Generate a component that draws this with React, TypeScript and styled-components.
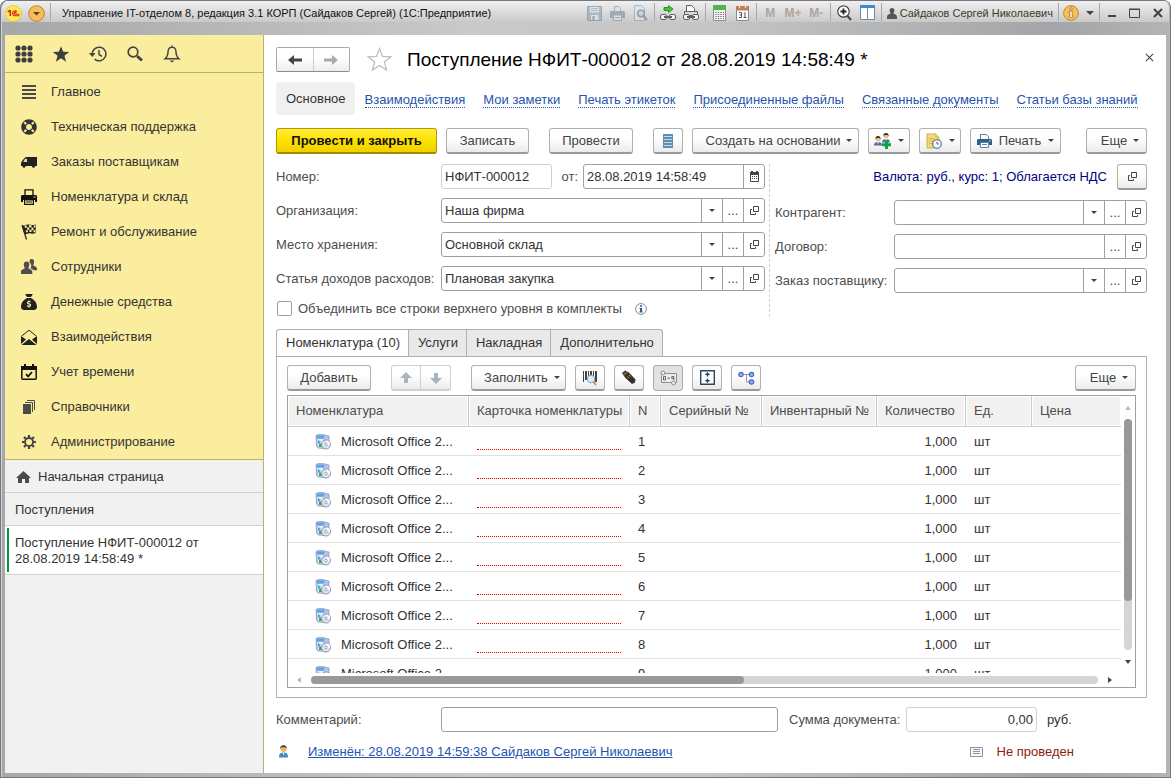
import React, { useState } from "react";
import styled, { createGlobalStyle, css } from "styled-components";
import { FaLifeRing } from "react-icons/fa";
import { FaSackDollar } from "react-icons/fa6";

const Global = createGlobalStyle`
  *, *::before, *::after { box-sizing: border-box; }
  body { margin: 0; font-family: "Liberation Sans", Arial, sans-serif; font-size: 13px; line-height: 16px; color: #333; }
  button, input { font: inherit; color: inherit; }
  button { cursor: pointer; }
  svg { display: block; flex: none; }
`;

/* ---------- window ---------- */

const Window = styled.div`
  height: 100vh;
  min-height: 640px;
  min-width: 1000px;
  display: flex;
  flex-direction: column;
  padding: 0 5px 5px;
  border-radius: 8px 8px 0 0;
  background: linear-gradient(90deg, #a6a7aa 0, #c9c9c9 40%, #c6c6c6 60%, #a4a5a8 90%, #b4b4b6 100%);
  box-shadow: inset 1px 1px 0 #77777a, inset -1px -1px 0 #77777a, inset 2px 2px 0 #d4d4d6;
`;

const TitleBar = styled.header`
  height: 35px;
  flex: none;
  display: flex;
  align-items: flex-start;
  padding-top: 2px;
  margin: 0 -3px;
  color: #111;
  background: linear-gradient(#77777a 0 1px, #f0f0f0 1px, #c9c9ca 22px, transparent 22px);
  border-radius: 8px 8px 0 0;
`;

const TitleText = styled.h1`
  flex: 1;
  min-width: 0;
  margin: 0;
  padding-left: 9px;
  font-size: 11px;
  font-weight: 400;
  line-height: 22px;
  white-space: nowrap;
  overflow: hidden;
`;

const TitleButton = styled.button<{ $w?: number; $dim?: boolean }>`
  width: ${(p) => p.$w ?? 23}px;
  height: 22px;
  flex: none;
  display: flex;
  align-items: center;
  justify-content: center;
  padding: 0;
  border: 0;
  background: none;
  font-size: 12px;
  font-weight: 700;
  color: #b0a39c;
  opacity: ${(p) => (p.$dim ? 0.6 : 1)};
`;

const TitleSep = styled.i<{ $gap?: number }>`
  width: 1px;
  height: 18px;
  flex: none;
  margin: 1px ${(p) => p.$gap ?? 2}px 0;
  background: #a9a9ab;
`;

const UserName = styled.button`
  display: flex;
  align-items: center;
  gap: 3px;
  height: 22px;
  padding: 0 3px;
  border: 0;
  background: none;
  font-size: 11px;
  white-space: nowrap;
  color: #3f3a2a;
`;

const Body = styled.div`
  flex: 1;
  min-height: 0;
  display: flex;
  background: #fff;
`;

/* ---------- sidebar ---------- */

const Sidebar = styled.aside`
  width: 259px;
  flex: none;
  background: #f1f1f1;
  border-right: 1px solid #bdb06c;
`;

const Sections = styled.nav`
  background: #fbed9e;
  border-bottom: 1px solid #bdb06c;
`;

const QuickBar = styled.div`
  height: 38px;
  display: flex;
  border-bottom: 1px solid #bdb06c;
  margin-bottom: 1px;
`;

const QuickButton = styled.button`
  width: 37px;
  padding: 0;
  display: flex;
  align-items: center;
  justify-content: center;
  border: 0;
  background: none;
  color: #444;
`;

const SectionLink = styled.a`
  height: 35px;
  display: flex;
  align-items: center;
  gap: 14px;
  padding-left: 16px;
  color: #333;
  text-decoration: none;
`;

const OpenTab = styled.a<{ $active?: boolean }>`
  display: flex;
  align-items: center;
  gap: 6px;
  padding: 9px 40px 7px 10px;
  border-bottom: 1px solid #d2d2d2;
  color: #333;
  text-decoration: none;
  ${(p) =>
    p.$active &&
    css`
      background: linear-gradient(#009646, #009646) 2px center / 2px calc(100% - 4px) no-repeat, #fff;
    `}
`;

/* ---------- document ---------- */

const Main = styled.main`
  flex: 1;
  min-width: 0;
  display: flex;
  flex-direction: column;
  padding: 0 19px 7px 12px;
`;

const Heading = styled.div`
  height: 47px;
  flex: none;
  display: flex;
  align-items: center;
  padding-top: 2px;
`;

const HistoryNav = styled.div`
  display: flex;
  height: 25px;
  width: 74px;
  margin-right: 17px;
  border: 1px solid #aaa;
  border-bottom-color: #8c8c8c;
  border-radius: 2px;
  background: linear-gradient(#fff 40%, #ededed);
`;

const HistoryButton = styled.button`
  flex: 1;
  display: flex;
  align-items: center;
  justify-content: center;
  padding: 0;
  border: 0;
  background: none;
  & + & {
    border-left: 1px solid #ccc;
  }
`;

const PlainButton = styled.button`
  display: flex;
  padding: 0;
  border: 0;
  background: none;
`;

const CloseForm = styled(PlainButton)`
  margin: -5px -7px 0 0;
`;

const DocTitle = styled.h2`
  flex: 1;
  margin: 0 0 0 15px;
  font-size: 19px;
  line-height: 24px;
  font-weight: 400;
  color: #000;
`;

const DocNav = styled.nav`
  display: flex;
  align-items: center;
  gap: 18px;
  height: 33px;
  flex: none;
  margin-bottom: 13px;
  white-space: nowrap;
`;

const DocNavCurrent = styled.span`
  padding: 1px 9px 0 10px;
  margin-right: -8px;
  line-height: 32px;
  border-radius: 4px;
  background: #f0f0f0;
`;

const DocNavLink = styled.a`
  margin-top: 3px;
  line-height: 14px;
  color: #2554ae;
  text-decoration: none;
  border-bottom: 1px dotted #2554ae;
`;

const Commands = styled.div`
  display: flex;
  gap: 9px;
  flex: none;
`;

const Button = styled.button<{ $w?: number; $primary?: boolean; $pressed?: boolean; $gapBefore?: boolean; $end?: boolean; $menu?: boolean }>`
  width: ${(p) => p.$w ?? 30}px;
  height: 26px;
  flex: none;
  display: flex;
  align-items: center;
  justify-content: center;
  gap: ${(p) => (p.$menu ? 6 : 7)}px;
  padding: 0 0 0 ${(p) => (p.$menu ? 7 : 0)}px;
  white-space: nowrap;
  color: #444;
  border: 1px solid #b0b0b0;
  border-bottom: 2px solid #9a9a9a;
  border-radius: 3px;
  background: linear-gradient(#fff 40%, #ebebeb);
  ${(p) =>
    p.$primary &&
    css`
      font-weight: 700;
      color: #111;
      border-color: #b09a00;
      border-bottom-color: #a08c00;
      background: linear-gradient(#ffec3c, #ffe100 50%, #f0cf00);
    `}
  ${(p) =>
    p.$pressed &&
    css`
      border: 1px solid #aaa;
      background: #e2e2e2;
    `}
  ${(p) => p.$gapBefore && "margin-left: 11px;"}
  ${(p) => p.$end && "margin-left: auto;"}
`;

const MoveGroup = styled.div`
  display: flex;
  margin-left: 11px;
  button:first-child { border-radius: 3px 0 0 3px; border-color: #d0d0d0; }
  button:last-child { border-radius: 0 3px 3px 0; border-color: #d0d0d0; border-left: 0; }
`;

const Form = styled.div`
  display: grid;
  grid-template-columns: minmax(0, 489fr) minmax(0, 372fr);
  gap: 10px;
  flex: none;
  margin-top: 10px;
`;

const FormColumn = styled.div<{ $right?: boolean }>`
  display: flex;
  flex-direction: column;
  gap: 9px;
  ${(p) =>
    p.$right &&
    css`
      margin-left: -6px;
      padding-left: 5px;
      border-left: 1px dashed #d0d0d0;
    `}
`;

const FieldRow = styled.div<{ $label: number }>`
  display: grid;
  grid-template-columns: ${(p) => p.$label}px minmax(0, 1fr);
  align-items: center;
  white-space: nowrap;
  color: #4d4d4d;
`;

const Combo = styled.div<{ $muted?: boolean; $w?: number }>`
  display: flex;
  height: 25px;
  ${(p) => (p.$w ? `width: ${p.$w}px; flex: none;` : "flex: 1;")}
  border: 1px solid ${(p) => (p.$muted ? "#d0d0d0" : "#a0a0a0")};
  border-radius: 3px;
  background: #fff;
  overflow: hidden;
`;

const TextInput = styled.input<{ $num?: boolean }>`
  flex: 1;
  min-width: 0;
  padding: 0 3px;
  border: 0;
  outline: 0;
  background: none;
  color: #333;
  text-align: ${(p) => (p.$num ? "right" : "left")};
`;

const ComboButton = styled.button`
  width: 21px;
  flex: none;
  display: flex;
  align-items: center;
  justify-content: center;
  padding: 0;
  border: 0;
  border-left: 1px solid #a0a0a0;
  background: none;
  color: #444;
`;

const NumberLine = styled.div`
  display: flex;
  align-items: center;
  justify-content: space-between;
`;

const DateGroup = styled.div`
  display: flex;
  align-items: center;
  gap: 5px;
`;

const CurrencyLine = styled.div`
  display: flex;
  align-items: center;
  justify-content: flex-end;
  gap: 10px;
  margin-bottom: 1px;
  color: #00007d;
  white-space: nowrap;
`;

const CheckLine = styled.div`
  display: flex;
  align-items: center;
  gap: 6px;
  height: 17px;
  padding-left: 1px;
  color: #4d4d4d;
`;

const CheckBox = styled.input`
  appearance: none;
  width: 15px;
  height: 15px;
  margin: 0;
  border: 1px solid #a0a0a0;
  border-radius: 2px;
  background: #fff;
`;

const CheckLabel = styled.label`
  margin-right: 7px;
`;

/* ---------- tabs and table ---------- */

const Tabs = styled.div`
  display: flex;
  flex: none;
  height: 28px;
  margin: 12px 0 -1px;
`;

const Tab = styled.button<{ $active: boolean }>`
  padding: 0 8px 0 9px;
  border: 1px solid #b0b0b0;
  border-left-width: 0;
  background: #e9e9e9;
  color: #333;
  &:first-child { border-left-width: 1px; border-radius: 3px 0 0 0; }
  &:last-child { border-radius: 0 3px 0 0; }
  ${(p) => p.$active && "background: #fff; border-bottom-color: #fff;"}
`;

const Panel = styled.section`
  flex: 1;
  min-height: 0;
  display: flex;
  flex-direction: column;
  gap: 4px;
  padding: 8px 10px 9px;
  border: 1px solid #b0b0b0;
`;

const Grid = styled.div`
  flex: 1;
  min-height: 0;
  display: grid;
  grid-template: minmax(0, 1fr) 14px / minmax(0, 1fr) 14px;
  border: 1px solid #a0a0a0;
`;

const TableClip = styled.div`
  overflow: hidden;
`;

const Table = styled.table`
  width: 100%;
  table-layout: fixed;
  border-collapse: separate;
  border-spacing: 0;
  color: #333;
`;

const Th = styled.th<{ $w?: number }>`
  ${(p) => (p.$w ? `width: ${p.$w}px;` : "")}
  height: 31px;
  padding: 0 4px 0 8px;
  text-align: left;
  font-weight: 400;
  white-space: nowrap;
  color: #4d4d4d;
  background: #f1f1f1;
  border-bottom: 1px solid #cbcbcb;
  border-right: 1px solid #cbcbcb;
  box-shadow: inset 0 0 0 1px #fff;
  &:last-child { border-right: 0; }
`;

const Td = styled.td<{ $num?: boolean }>`
  height: 29px;
  padding: 1px 9px 0 8px;
  border-bottom: 1px solid #e2e2e2;
  text-align: ${(p) => (p.$num ? "right" : "left")};
  white-space: nowrap;
`;

const ItemCell = styled.div`
  display: flex;
  align-items: center;
  gap: 10px;
  padding-left: 19px;
`;

const RequiredMark = styled.div`
  height: 16px;
  border-bottom: 1px dotted #e00000;
`;

const VScroll = styled.div`
  display: flex;
  flex-direction: column;
  align-items: center;
  justify-content: space-between;
  padding: 8px 0 7px;
`;

const HScroll = styled.div`
  display: flex;
  align-items: center;
  justify-content: space-between;
  padding: 0 7px;
`;

const Track = styled.div<{ $vertical?: boolean }>`
  flex: 1;
  border-radius: 4px;
  background: #d5d5d5;
  display: flex;
  ${(p) => (p.$vertical ? "width: 8px; margin: 7px 0 8px; flex-direction: column;" : "height: 8px; margin: 0 8px;")}
`;

const Thumb = styled.div<{ $share: number }>`
  flex: 0 0 ${(p) => p.$share}%;
  border-radius: 4px;
  background: #999;
`;

/* ---------- footer ---------- */

const Totals = styled.div`
  display: grid;
  grid-template-columns: 165px minmax(0, 1fr) 128px 131px 110px;
  align-items: center;
  flex: none;
  margin-top: 9px;
  white-space: nowrap;
  color: #4d4d4d;
`;

const SumLabel = styled.label`
  padding-left: 11px;
`;

const Currency = styled.span`
  padding-left: 10px;
  color: #333;
`;

const Status = styled.div`
  display: flex;
  align-items: center;
  flex: none;
  height: 29px;
  margin-top: 5px;
`;

const ChangedLink = styled.a`
  margin-left: 17px;
  color: #2554ae;
  text-decoration: underline;
`;

const NotPosted = styled.span`
  display: flex;
  align-items: center;
  gap: 14px;
  margin-left: auto;
  margin-right: 73px;
  color: #8c1a11;
`;

/* ---------- icons ---------- */

const Arrow = ({ size = 6, color = "#444" }: { size?: number; color?: string }) => (
  <svg width={size} height={size / 2} viewBox="0 0 6 3"><path d="M0 0h6L3 3z" fill={color} /></svg>
);

const Tri = ({ dir, color }: { dir: "up" | "down" | "left" | "right"; color: string }) => {
  const d = { up: "M4 2l3 4H1z", down: "M1 2h6L4 6z", left: "M6 1v6L2 4z", right: "M2 1v6l4-3z" }[dir];
  return <svg width="8" height="8" viewBox="0 0 8 8"><path d={d} fill={color} /></svg>;
};

const OpenIcon = () => (
  <svg width="11" height="11" viewBox="0 0 11 11" fill="none" stroke="#444">
    <path d="M4.500 1.500h5v5h-5zM3 4.500H1.500v5h5V8" />
  </svg>
);

const CalendarIcon = () => (
  <svg width="11" height="11" viewBox="0 0 11 11">
    <path d="M1 1h1V0h2v1h3V0h2v1h1v3H1z" fill="#444" />
    <path d="M1.500 4v6.500h8V4" fill="none" stroke="#444" />
    <path d="M3 5h1v1H3zM5 5h1v1H5zM7 5h1v1H7zM3 7h1v1H3zM5 7h1v1H5zM7 7h1v1H7z" fill="#444" />
  </svg>
);

const BackArrow = ({ flip, color }: { flip?: boolean; color: string }) => (
  <svg width="14" height="12" viewBox="0 0 14 12">
    <path d="M0 6l6-5v3.600h8v2.800H6V11z" fill={color} transform={flip ? "matrix(-1 0 0 1 14 0)" : undefined} />
  </svg>
);

const MoveArrow = ({ down }: { down?: boolean }) => (
  <svg width="12" height="12" viewBox="0 0 12 12">
    <path d="M6 0l6 6H8v5H4V6H0z" fill="#a9b4bc" transform={down ? "matrix(1 0 0 -1 0 12)" : undefined} />
  </svg>
);

const Star = ({ size, outline }: { size: number; outline?: boolean }) => (
  <svg width={size} height={size} viewBox="0 0 24 24">
    <path
      d="M12 1.500l2.900 7.600 8 .3-6.300 5 2.200 7.800-6.800-4.500-6.800 4.500 2.200-7.800-6.300-5 8-.3z"
      fill={outline ? "#fff" : "#3f3f3f"} stroke={outline ? "#b9bec4" : "none"} strokeWidth="1.200"
    />
  </svg>
);

const GridDots = () => (
  <svg width="18" height="18" viewBox="0 0 18 18" fill="#3f3f3f">
    {[3, 9, 15].map((y) => [3, 9, 15].map((x) => <circle key={`${x}${y}`} cx={x} cy={y} r="2.600" />))}
  </svg>
);

const HistoryIcon = () => (
  <svg width="18" height="18" viewBox="0 0 18 18" fill="none" stroke="#444" strokeWidth="1.500">
    <path d="M3.300 9.500a6.800 6.800 0 1 1 2.300 4.600M10 5v4.500l3 1.800" />
    <path d="M0 8h6.500l-3.200 4z" fill="#444" stroke="none" />
  </svg>
);

const SearchIcon = () => (
  <svg width="18" height="18" viewBox="0 0 18 18" fill="none" stroke="#444">
    <circle cx="7" cy="7" r="4.800" strokeWidth="1.700" />
    <path d="M11 11l5 4.500" strokeWidth="3" />
  </svg>
);

const BellIcon = () => (
  <svg width="18" height="18" viewBox="0 0 18 18" fill="none" stroke="#444" strokeWidth="1.400">
    <path d="M9 2.200c-3 0-4 2.300-4 5 0 3.500-1.200 5-3 6.600h14c-1.800-1.600-3-3.100-3-6.600 0-2.700-1-5-4-5zM9 .5v2" />
    <path d="M6.500 15.500h5L9 17.500z" fill="#444" stroke="none" />
  </svg>
);

const LinesIcon = () => (
  <svg width="16" height="16" viewBox="0 0 16 16" fill="#4a4a4a">
    <path d="M1 1h14v2H1zM1 5h14v2H1zM1 9h14v2H1zM1 13h14v2H1z" />
  </svg>
);

const VanIcon = () => (
  <svg width="16" height="16" viewBox="0 0 16 16">
    <path d="M5 3h11v9H0V9l1-2 2.500-3z" fill="#222" />
    <path d="M4 4.800h2V8H2.300z" fill="#e9dc94" />
    <circle cx="3" cy="12" r="1.700" fill="#222" /><circle cx="12.500" cy="12" r="1.700" fill="#222" />
  </svg>
);

const PrinterIcon = () => (
  <svg width="16" height="16" viewBox="0 0 16 16">
    <path d="M4 6V.8h8V6" fill="none" stroke="#111" strokeWidth="1.300" />
    <path d="M1 6h14l1 1v6h-2v-2H2v2H0V7z" fill="#111" />
    <path d="M3.600 11h8.800v4.300H3.600z" fill="#fbed9e" stroke="#111" strokeWidth="1.200" />
    <path d="M5 13h6" stroke="#111" /><path d="M12.500 8h2" stroke="#fbed9e" />
  </svg>
);

const FlagIcon = () => (
  <svg width="16" height="16" viewBox="0 0 16 16">
    <path d="M1 1l4.500 14.500" stroke="#222" strokeWidth="1.200" />
    <path d="M1 1.500C4 2 5 0 8 .5s4 1 7-.3L14.500 9c-2.500 1.300-4 .3-6 .2s-3 1.300-5 1z" fill="#222" />
    <path d="M3.500 1.800l2-.6.5 2.200-2 .6zM8 .9l2.500.4v2.200L8 3.200zM6 3.500l2-.3.400 2.500-2 .3zM10.500 3.500l2 .2-.1 2.500-2-.3zM4.600 6.600l1.900-.6.4 2-1.900.6zM8.500 5.700l2 .3v2l-2-.1zM12.900 1.400l1.600-.4v2.400l-1.700.2zM12.500 6.200l1.700-.3-.1 2.100-1.700.4z" fill="#fbed9e" />
  </svg>
);

const PeopleIcon = () => (
  <svg width="16" height="16" viewBox="0 0 16 16" fill="#4f4f4f">
    <path d="M10.500 0c2 0 2.800 1.500 2.600 3.300-.1 1.400-.7 2.200-.9 3 1.300.9 3.800 1.400 3.800 3.400v1.600h-3.500c-.6-.9-2-1.400-3-1.800.8-1.200 1.500-4.500-.9-6.100C8.500 1.600 8.700 0 10.500 0z" />
    <path d="M5.500 2.500c2.200 0 3 1.600 2.800 3.500-.1 1.400-.8 2.400-1 3.200 1.500 1 4 1.400 4 3.600V15H0v-2.200c0-2.200 2.500-2.600 3.800-3.600-.3-.8-.9-1.800-1-3.200-.2-1.900.6-3.500 2.700-3.500z" />
  </svg>
);

const MailIcon = () => (
  <svg width="16" height="16" viewBox="0 0 16 16">
    <path d="M.7 7L8 1.200 15.300 7" fill="none" stroke="#222" />
    <path d="M0 7l5 3.500L0 15zM16 7l-5 3.500 5 4.500z" fill="#222" />
    <path d="M8 10l7.500 6H.5z" fill="#222" />
  </svg>
);

const TimeIcon = () => (
  <svg width="16" height="16" viewBox="0 0 16 16">
    <rect x=".8" y="2.800" width="14.400" height="12.400" rx="1" fill="none" stroke="#111" strokeWidth="1.500" />
    <path d="M0 2h3V0h2v2h6V0h2v2h3v4H0z" fill="#111" />
    <path d="M5 10.200l2.200 2.200L11 8" fill="none" stroke="#111" strokeWidth="1.700" />
  </svg>
);

const BooksIcon = () => (
  <svg width="16" height="16" viewBox="0 0 16 16">
    <path d="M2 5h8v10H2z" fill="#4a4a4a" />
    <path d="M4 3.500h7.500V13M6 1.500h7.500V11" fill="none" stroke="#4a4a4a" />
  </svg>
);

const GearIcon = () => (
  <svg width="16" height="16" viewBox="0 0 16 16" fill="none" stroke="#444">
    <circle cx="8" cy="8" r="4" strokeWidth="1.800" />
    <g strokeWidth="2.200">
      <path d="M8 1v2.500M8 12.500V15M1 8h2.500M12.500 8H15M3 3l1.800 1.800M11.200 11.200L13 13M13 3l-1.800 1.800M4.800 11.200L3 13" />
    </g>
  </svg>
);

const HomeIcon = () => (
  <svg width="17" height="14" viewBox="0 0 17 14"><path d="M8.500 1L16 8h-2v5h-4V9H7v4H3V8H1z" fill="#4a4a4a" /></svg>
);

const ListIcon = () => (
  <svg width="10" height="14" viewBox="0 0 10 14">
    <path d="M0 0h10v14H0z" fill="#5f8db0" />
    <path d="M1 2.500h8M1 5.500h8M1 8.500h8M1 11.500h8" stroke="#c5dced" />
  </svg>
);

const Person = ({ x, y, c }: { x: number; y: number; c: string }) => (
  <g transform={`translate(${x} ${y})`}>
    <path d="M0 9.500c0-2.500 1.500-3.500 4-3.500s4 1 4 3.500z" fill={c} />
    <path d="M3.300 6L4 9l.7-3z" fill="#fff" />
    <circle cx="4" cy="3.300" r="2.300" fill="#f0bd86" />
    <path d="M1.500 3.400C1 1 2.500 0 4 0s3 1 2.500 3.400L5.500 2h-3z" fill="#3b2a20" />
  </g>
);

const AddPeopleIcon = () => (
  <svg width="17" height="16" viewBox="0 0 17 16">
    <Person x={8} y={0} c="#4c79a4" />
    <Person x={0} y={3} c="#4c6f97" />
    <path d="M11 7.500h3v2.700h3v3h-3V16h-3v-2.800H8v-3h3z" fill="#12a043" />
  </svg>
);

const NoteClockIcon = () => (
  <svg width="16" height="16" viewBox="0 0 16 16">
    <path d="M1 1h9l3 3v11H1z" fill="#f3d878" stroke="#d3ad44" />
    <path d="M10 1v3h3" fill="#fff2bf" stroke="#d3ad44" />
    <path d="M3 5.500h5M3 8h4M3 10.500h3" stroke="#d8b552" />
    <circle cx="11" cy="11" r="4.300" fill="#f5f9fd" stroke="#5c85b4" strokeWidth="1.300" />
    <path d="M11 8.500V11h2" stroke="#d03c2b" fill="none" />
  </svg>
);

const PrintBlueIcon = () => (
  <svg width="15" height="14" viewBox="0 0 15 14">
    <path d="M3.500 6V.5h6l2 2V6" fill="#fff" stroke="#5a83a8" />
    <path d="M1 5h13l1 1v5H0V6z" fill="#2f5f8a" />
    <path d="M3.500 8.500h8v5h-8z" fill="#fff" stroke="#5a83a8" />
    <path d="M5 10.500h5" stroke="#5a83a8" /><path d="M12 7h1.500" stroke="#cfe3f3" />
  </svg>
);

const InfoSmall = () => (
  <svg width="12" height="12" viewBox="0 0 12 12">
    <circle cx="6" cy="6" r="5.400" fill="#fff" stroke="#888" />
    <path d="M5 2.300h2v1.500H5zM4.500 5H7v3.500h.8v1H4.300v-1H5V6h-.5z" fill="#2b5c94" />
  </svg>
);

const BarcodeSearchIcon = () => (
  <svg width="16" height="16" viewBox="0 0 16 16">
    <path d="M1 1h1v11H1zM3 1h2v9H3zM6 1h1v6H6zM8 1h2v5H8zM11 1h1v5h-1zM13 1h2v11h-2z" fill="#444" />
    <circle cx="9" cy="9" r="3.600" fill="#dceefb" stroke="#8fb0cc" strokeWidth="1.200" />
    <path d="M11.500 11.800L14 15" stroke="#d5813a" strokeWidth="1.800" />
  </svg>
);

const ScannerIcon = () => (
  <svg width="16" height="16" viewBox="0 0 16 16">
    <path d="M1 3l3-2.500 4 2 6.500 7-.5 3-3 1.500L4 7.500z" fill="#3a3129" />
    <path d="M2 3.500L4.500 1.800l2.500 1L4 5.500z" fill="#6b5c4a" />
    <path d="M6.500 6.500l1.500 1.500M8 5l1.500 1.500" stroke="#c9a03c" />
  </svg>
);

const SerialIcon = () => (
  <svg width="17" height="16" viewBox="0 0 17 16" fill="none" stroke="#8d8d8d">
    <path d="M4.500 3.500h12v9h-15v-7" fill="#ededed" />
    <circle cx="3" cy="3" r="2" fill="#ededed" />
    <circle cx="13.500" cy="13" r="2" fill="#ededed" />
    <path d="M3.500 6.500h2v3.500h-2zM7.500 8.200h2.500M13.800 10V6.500h-2v2h2" stroke="#666" />
  </svg>
);

const HeightIcon = () => (
  <svg width="15" height="15" viewBox="0 0 15 15">
    <path d="M.7.7h13.600v13.600H.7z" fill="#fff" stroke="#2d4660" strokeWidth="1.400" />
    <path d="M7.500 2l2.700 3H8.200v1.500H6.800V5h-2zM7.500 13l2.700-3H8.200V8.500H6.800V10h-2z" fill="#2d4660" />
  </svg>
);

const TreeIcon = () => (
  <svg width="17" height="14" viewBox="0 0 17 14">
    <path d="M4 3.500h9M8.500 3.500v7.500H13" fill="none" stroke="#999" />
    <g fill="#8fb0f2" stroke="#4a6ad4" strokeWidth="1.200">
      <circle cx="3" cy="3.500" r="2.200" /><circle cx="13.500" cy="3.500" r="2.200" /><circle cx="13.500" cy="11" r="2.200" />
    </g>
  </svg>
);

const SoftwareIcon = () => (
  <svg width="16" height="16" viewBox="0 0 16 16">
    <path d="M1 1.500l2.500-1 6 .3 1.500.7 3 .5v9l-3 3.500-8-.5L1.500 12z" fill="#b9c2e4" stroke="#8e97bf" strokeWidth=".8" />
    <path d="M1.500 1.500h8l-.5 3H2z" fill="#5aa5e6" />
    <path d="M2.500 5h5.500v8.500l-5-.5z" fill="#e6ecfa" />
    <path d="M4 9.500h3V13H4z" fill="#2fb14a" /><path d="M3 6l3 2-3 2z" fill="#4a9fe0" />
    <circle cx="11" cy="10.500" r="4.500" fill="#dfe4f3" stroke="#8b93b8" />
    <path d="M11 6.500a4 4 0 0 1 4 4h-2.500z" fill="#fff" />
    <circle cx="11" cy="10.500" r="1.300" fill="#fff" stroke="#8b93b8" strokeWidth=".8" />
  </svg>
);

const AuthorIcon = () => (
  <svg width="15" height="13" viewBox="0 0 15 13">
    <path d="M3 12.500c0-4 1.500-5 4.500-5s4.500 1 4.500 5z" fill="#3b8fc0" />
    <path d="M6.500 7.500l1 3 1-3z" fill="#e8f4fb" />
    <circle cx="7.500" cy="4" r="3" fill="#f0b66e" />
    <path d="M4.300 4C4 1.500 5.500.3 7.500.3S11 1.500 10.700 4L9.500 2.300h-4z" fill="#4b3421" />
  </svg>
);

const JournalIcon = () => (
  <svg width="13" height="10" viewBox="0 0 13 10">
    <path d="M.5.500h12v9H.5z" fill="#f7fafc" stroke="#8494a6" />
    <path d="M3 2.500h7M3 4.500h7M3 6.500h7" stroke="#8494a6" />
  </svg>
);

const LogoIcon = () => (
  <svg width="17" height="17" viewBox="0 0 17 17">
    <circle cx="8.500" cy="8.500" r="8" fill="#ffe94e" stroke="#d9bd4a" strokeWidth=".8" />
    <path d="M2.800 7l1.500-1.200h1V11" fill="none" stroke="#d8201c" strokeWidth="1.500" />
    <path d="M11.800 6.800a2.400 2.400 0 1 0-1.600 3.900h4.300M11 8.400a.9.900 0 1 0-.9.800h4.400" fill="none" stroke="#d8201c" strokeWidth="1.100" />
  </svg>
);

const RoundArrowIcon = () => (
  <svg width="17" height="17" viewBox="0 0 17 17">
    <circle cx="8.500" cy="8.500" r="7.800" fill="#f7bd5c" stroke="#b98327" />
    <path d="M5 7h7l-3.500 3.600z" fill="#5d431a" />
  </svg>
);

const SaveIcon = () => (
  <svg width="15" height="15" viewBox="0 0 15 15">
    <path d="M.5.500h14v14H.5z" fill="#8ea4b8" stroke="#6d8599" />
    <path d="M3 1h9v5.500H3z" fill="#dde5ec" /><path d="M4 2.500h7M4 4.500h7" stroke="#8ea4b8" />
    <path d="M4 9h7.500v5H4z" fill="#dde5ec" /><path d="M5.500 10h2v4h-2z" fill="#6d8599" />
  </svg>
);

const GreyPrint = () => (
  <svg width="15" height="15" viewBox="0 0 15 15">
    <path d="M4.500 6V.5h4l2 2V6" fill="#dfe5ea" stroke="#7b8c9b" />
    <path d="M1 5h13l1 1v6H0V6z" fill="#7b8c9b" />
    <path d="M3.500 9h8v5.500h-8z" fill="#dfe5ea" stroke="#7b8c9b" /><path d="M5 11.500h5" stroke="#7b8c9b" />
  </svg>
);

const PreviewIcon = () => (
  <svg width="15" height="16" viewBox="0 0 15 16">
    <path d="M1.500.5h7l3 3v12h-10z" fill="#dfe6ec" stroke="#8799a8" />
    <circle cx="8" cy="8.500" r="3.200" fill="#c3d4e2" stroke="#5f7a92" strokeWidth="1.600" />
    <path d="M10.300 11L14 15" stroke="#5f7a92" strokeWidth="2" />
  </svg>
);

/* Chain with three links, shared by both link buttons. */
const Chain = () => (
  <g fill="#f2f2f2" stroke="#596067">
    <rect x=".5" y="9.500" width="6" height="5" rx="1.500" />
    <rect x="9.500" y="9.500" width="6" height="5" rx="1.500" />
    <path d="M4 12h8" strokeWidth="2" />
  </g>
);

const LinkIcon = () => (
  <svg width="16" height="16" viewBox="0 0 16 16">
    <path d="M4 2.500h4.500V.5L13 4 8.500 7.500v-2H4z" fill="#3ecb2a" stroke="#1d7c14" strokeWidth=".8" />
    <Chain />
  </svg>
);

const PrintLinkIcon = () => (
  <svg width="16" height="16" viewBox="0 0 16 16">
    <path d="M3.500 7V.5h5l3 3V7" fill="#fff" stroke="#596067" />
    <path d="M1.500 6.500h13v4h-13z" fill="#d7dadd" stroke="#596067" />
    <Chain />
  </svg>
);

const CalcIcon = () => (
  <svg width="13" height="16" viewBox="0 0 13 16">
    <path d="M.5.500h12v15H.5z" fill="#f5f5f5" stroke="#8b8b8b" /><path d="M0 0h13v5H0z" fill="#4cb84c" />
    <path d="M3 7v7M5.500 7v7M8 7v7" stroke="#666" strokeWidth="1.200" strokeDasharray="1 1" /><path d="M10.500 7v7" stroke="#d33" strokeDasharray="1 1" />
  </svg>
);

const DateIcon = () => (
  <svg width="13" height="16" viewBox="0 0 13 16">
    <path d="M.5 1.500h12v14H.5z" fill="#fff" stroke="#7d8c99" /><path d="M0 1h13v4.500H0z" fill="#c08154" />
    <path d="M3.500 0v3M9.500 0v3" stroke="#f3e3d8" strokeWidth="1.200" />
    <path d="M3 7.500h2.500v5H3M3.500 10h2M8 8.500l1-1v5M7.500 12.500h3" fill="none" stroke="#444" strokeWidth=".9" />
  </svg>
);

const ZoomIcon = () => (
  <svg width="15" height="16" viewBox="0 0 15 16" fill="none" stroke="#444">
    <circle cx="6.500" cy="6.500" r="5.700" fill="#fff" strokeWidth="1.200" />
    <path d="M3.500 6.500h6M6.500 3.500v6" stroke="#222" strokeWidth="1.800" /><path d="M10.500 11l3.500 4" strokeWidth="2" />
  </svg>
);

const PanelsIcon = () => (
  <svg width="15" height="16" viewBox="0 0 15 16">
    <path d="M.5 1.500h14v13H.5z" fill="#fff" stroke="#6f8aa0" /><path d="M0 0h15v3H0z" fill="#3b8ad8" /><path d="M7.500 3v12" stroke="#6f8aa0" />
  </svg>
);

const UserIcon = () => (
  <svg width="10" height="11" viewBox="0 0 10 11" fill="#555">
    <path d="M5 0c1.700 0 2.500 1.200 2.400 2.700C7.300 4 6.600 4.800 6.300 5.500 7.500 6.200 10 6.700 10 8.700V11H0V8.700c0-2 2.500-2.500 3.700-3.200-.3-.7-1-1.500-1.100-2.800C2.500 1.200 3.300 0 5 0z" />
  </svg>
);

const InfoIcon = () => (
  <svg width="16" height="16" viewBox="0 0 16 16">
    <circle cx="8" cy="8" r="7.400" fill="#f5bf5b" stroke="#b98a36" />
    <path d="M7 3h2.200v2H7zM6 6.300h3.200V11h1v1.300H6V11h1V7.600H6z" fill="#fff" stroke="#7a5a1d" strokeWidth=".6" />
  </svg>
);

const CloseX = ({ size, w }: { size: number; w: number }) => (
  <svg width={size} height={size} viewBox="0 0 10 10"><path d="M1 1l8 8M9 1l-8 8" stroke="#444" strokeWidth={w} /></svg>
);

/* ---------- data ---------- */

const sections = [
  { name: "Главное", icon: <LinesIcon /> },
  { name: "Техническая поддержка", icon: <FaLifeRing size={16} color="#333" /> },
  { name: "Заказы поставщикам", icon: <VanIcon /> },
  { name: "Номенклатура и склад", icon: <PrinterIcon /> },
  { name: "Ремонт и обслуживание", icon: <FlagIcon /> },
  { name: "Сотрудники", icon: <PeopleIcon /> },
  { name: "Денежные средства", icon: <FaSackDollar size={16} color="#222" /> },
  { name: "Взаимодействия", icon: <MailIcon /> },
  { name: "Учет времени", icon: <TimeIcon /> },
  { name: "Справочники", icon: <BooksIcon /> },
  { name: "Администрирование", icon: <GearIcon /> },
];

const links = ["Взаимодействия", "Мои заметки", "Печать этикеток", "Присоединенные файлы", "Связанные документы", "Статьи базы знаний"];
const tabNames = ["Номенклатура (10)", "Услуги", "Накладная", "Дополнительно"];
const rows = [1, 2, 3, 4, 5, 6, 7, 8, 9, 10];

interface ComboFieldProps {
  id: string;
  label: string;
  labelWidth: number;
  value?: string;
  list?: boolean;
}

const ComboField = ({ id, label, labelWidth, value = "", list = true }: ComboFieldProps) => (
  <FieldRow $label={labelWidth}>
    <label htmlFor={id}>{label}</label>
    <Combo>
      <TextInput id={id} defaultValue={value} />
      {list && <ComboButton aria-label="Список"><Arrow /></ComboButton>}
      <ComboButton aria-label="Выбрать">...</ComboButton>
      <ComboButton aria-label="Открыть"><OpenIcon /></ComboButton>
    </Combo>
  </FieldRow>
);

export default function App() {
  const [tab, setTab] = useState(0);
  return (
    <>
      <Global />
      <Window>
        <TitleBar>
          <TitleButton aria-label="1С"><LogoIcon /></TitleButton>
          <TitleButton aria-label="Меню"><RoundArrowIcon /></TitleButton>
          <TitleSep />
          <TitleText>Управление IT-отделом 8, редакция 3.1 КОРП (Сайдаков Сергей) (1С:Предприятие)</TitleText>
          <TitleButton $dim aria-label="Сохранить"><SaveIcon /></TitleButton>
          <TitleButton $dim aria-label="Печать"><GreyPrint /></TitleButton>
          <TitleButton $dim aria-label="Просмотр"><PreviewIcon /></TitleButton>
          <TitleSep />
          <TitleButton aria-label="Перейти по ссылке"><LinkIcon /></TitleButton>
          <TitleButton aria-label="Получить ссылку"><PrintLinkIcon /></TitleButton>
          <TitleSep />
          <TitleButton aria-label="Калькулятор"><CalcIcon /></TitleButton>
          <TitleButton aria-label="Календарь"><DateIcon /></TitleButton>
          <TitleSep />
          <TitleButton>M</TitleButton>
          <TitleButton>M+</TitleButton>
          <TitleButton>M-</TitleButton>
          <TitleSep />
          <TitleButton aria-label="Масштаб"><ZoomIcon /></TitleButton>
          <TitleButton aria-label="Панели"><PanelsIcon /></TitleButton>
          <TitleSep />
          <UserName><UserIcon />Сайдаков Сергей Николаевич</UserName>
          <TitleSep />
          <TitleButton $w={20} aria-label="Справка"><InfoIcon /></TitleButton>
          <TitleButton $w={18} aria-label="Ещё"><Arrow size={8} /></TitleButton>
          <TitleSep $gap={0} />
          <TitleButton aria-label="Свернуть"><svg width="8" height="10" viewBox="0 0 8 10"><path d="M0 7h8v2H0z" fill="#444" /></svg></TitleButton>
          <TitleButton aria-label="Развернуть"><svg width="11" height="10" viewBox="0 0 11 10"><path d="M.5 1.500h10v8H.5zM0 1h11" fill="none" stroke="#444" /></svg></TitleButton>
          <TitleButton aria-label="Закрыть"><CloseX size={10} w={2} /></TitleButton>
        </TitleBar>

        <Body>
          <Sidebar>
            <Sections>
              <QuickBar>
                <QuickButton aria-label="Разделы"><GridDots /></QuickButton>
                <QuickButton aria-label="Избранное"><Star size={18} /></QuickButton>
                <QuickButton aria-label="История"><HistoryIcon /></QuickButton>
                <QuickButton aria-label="Поиск"><SearchIcon /></QuickButton>
                <QuickButton aria-label="Оповещения"><BellIcon /></QuickButton>
              </QuickBar>
              {sections.map((s) => (
                <SectionLink key={s.name} href="#">{s.icon}{s.name}</SectionLink>
              ))}
            </Sections>
            <OpenTab href="#"><HomeIcon />Начальная страница</OpenTab>
            <OpenTab href="#">Поступления</OpenTab>
            <OpenTab href="#" $active>Поступление НФИТ-000012 от 28.08.2019 14:58:49 *</OpenTab>
          </Sidebar>

          <Main>
            <Heading>
              <HistoryNav>
                <HistoryButton aria-label="Назад"><BackArrow color="#444" /></HistoryButton>
                <HistoryButton aria-label="Вперед"><BackArrow flip color="#aaa" /></HistoryButton>
              </HistoryNav>
              <PlainButton aria-label="В избранное"><Star size={25} outline /></PlainButton>
              <DocTitle>Поступление НФИТ-000012 от 28.08.2019 14:58:49 *</DocTitle>
              <CloseForm aria-label="Закрыть форму"><CloseX size={9} w={1.2} /></CloseForm>
            </Heading>

            <DocNav>
              <DocNavCurrent>Основное</DocNavCurrent>
              {links.map((l) => <DocNavLink key={l} href="#">{l}</DocNavLink>)}
            </DocNav>

            <Commands>
              <Button $w={161} $primary>Провести и закрыть</Button>
              <Button $w={83}>Записать</Button>
              <Button $w={84} $gapBefore>Провести</Button>
              <Button $gapBefore aria-label="Движения"><ListIcon /></Button>
              <Button $w={167} $menu>Создать на основании<Arrow /></Button>
              <Button $w={42} aria-label="Участники"><AddPeopleIcon /><Arrow /></Button>
              <Button $w={42} aria-label="Напоминание"><NoteClockIcon /><Arrow /></Button>
              <Button $w={91}><PrintBlueIcon />Печать<Arrow /></Button>
              <Button $w={61} $menu $end>Еще<Arrow /></Button>
            </Commands>

            <Form>
              <FormColumn>
                <FieldRow $label={165}>
                  <label htmlFor="number">Номер:</label>
                  <NumberLine>
                    <Combo $muted $w={111}><TextInput id="number" defaultValue="НФИТ-000012" /></Combo>
                    <DateGroup>
                      <label htmlFor="date">от:</label>
                      <Combo $w={182}>
                        <TextInput id="date" defaultValue="28.08.2019 14:58:49" />
                        <ComboButton aria-label="Календарь"><CalendarIcon /></ComboButton>
                      </Combo>
                    </DateGroup>
                  </NumberLine>
                </FieldRow>
                <ComboField id="org" label="Организация:" labelWidth={165} value="Наша фирма" />
                <ComboField id="store" label="Место хранения:" labelWidth={165} value="Основной склад" />
                <ComboField id="item" label="Статья доходов расходов:" labelWidth={165} value="Плановая закупка" />
                <CheckLine>
                  <CheckBox type="checkbox" id="merge" />
                  <CheckLabel htmlFor="merge">Объединить все строки верхнего уровня в комплекты</CheckLabel>
                  <InfoSmall />
                </CheckLine>
              </FormColumn>
              <FormColumn $right>
                <CurrencyLine>
                  <span>Валюта: руб., курс: 1; Облагается НДС</span>
                  <Button aria-label="Открыть валюту"><OpenIcon /></Button>
                </CurrencyLine>
                <ComboField id="partner" label="Контрагент:" labelWidth={119} />
                <ComboField id="contract" label="Договор:" labelWidth={119} list={false} />
                <ComboField id="order" label="Заказ поставщику:" labelWidth={119} />
              </FormColumn>
            </Form>

            <Tabs role="tablist">
              {tabNames.map((t, i) => (
                <Tab key={t} role="tab" aria-selected={i === tab} $active={i === tab} onClick={() => setTab(i)}>{t}</Tab>
              ))}
            </Tabs>

            <Panel>
              <Commands>
                <Button $w={84}>Добавить</Button>
                <MoveGroup>
                  <Button aria-label="Вверх"><MoveArrow /></Button>
                  <Button aria-label="Вниз"><MoveArrow down /></Button>
                </MoveGroup>
                <Button $w={95} $menu $gapBefore>Заполнить<Arrow /></Button>
                <Button aria-label="Поиск по штрихкоду"><BarcodeSearchIcon /></Button>
                <Button aria-label="Терминал"><ScannerIcon /></Button>
                <Button $pressed aria-label="Серийные номера"><SerialIcon /></Button>
                <Button aria-label="Высота строк"><HeightIcon /></Button>
                <Button aria-label="Дерево"><TreeIcon /></Button>
                <Button $w={61} $menu $end>Еще<Arrow /></Button>
              </Commands>
              <Grid>
                <TableClip>
                  <Table>
                    <thead>
                      <tr>
                        <Th $w={181}>Номенклатура</Th>
                        <Th $w={161}>Карточка номенклатуры</Th>
                        <Th $w={31}>N</Th>
                        <Th $w={101}>Серийный №</Th>
                        <Th $w={115}>Инвентарный №</Th>
                        <Th $w={89}>Количество</Th>
                        <Th $w={66}>Ед.</Th>
                        <Th>Цена</Th>
                      </tr>
                    </thead>
                    <tbody>
                      {rows.map((n) => (
                        <tr key={n}>
                          <Td><ItemCell><SoftwareIcon />Microsoft Office 2...</ItemCell></Td>
                          <Td><RequiredMark /></Td>
                          <Td>{n}</Td>
                          <Td />
                          <Td />
                          <Td $num>1,000</Td>
                          <Td>шт</Td>
                          <Td />
                        </tr>
                      ))}
                    </tbody>
                  </Table>
                </TableClip>
                <VScroll>
                  <Tri dir="up" color="#bbb" />
                  <Track $vertical><Thumb $share={79} /></Track>
                  <Tri dir="down" color="#444" />
                </VScroll>
                <HScroll>
                  <Tri dir="left" color="#bbb" />
                  <Track><Thumb $share={55} /></Track>
                  <Tri dir="right" color="#444" />
                </HScroll>
              </Grid>
            </Panel>

            <Totals>
              <label htmlFor="comment">Комментарий:</label>
              <Combo><TextInput id="comment" /></Combo>
              <SumLabel htmlFor="total">Сумма документа:</SumLabel>
              <Combo $muted $w={131}><TextInput id="total" $num defaultValue="0,00" /></Combo>
              <Currency>руб.</Currency>
            </Totals>

            <Status>
              <AuthorIcon />
              <ChangedLink href="#">Изменён: 28.08.2019 14:59:38 Сайдаков Сергей Николаевич</ChangedLink>
              <NotPosted><JournalIcon />Не проведен</NotPosted>
            </Status>
          </Main>
        </Body>
      </Window>
    </>
  );
}
